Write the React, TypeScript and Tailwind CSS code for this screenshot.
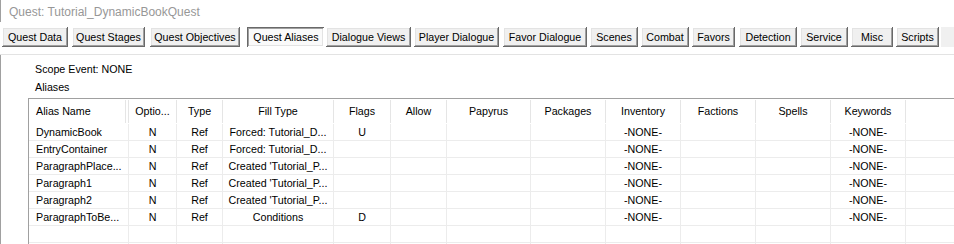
const tabs = [
  { label: "Quest Data", cls: "ml-[2px] w-[66px]" },
  { label: "Quest Stages", cls: "ml-[4px] w-[73px]" },
  { label: "Quest Objectives", cls: "ml-[5px] w-[90px]" },
  { label: "Quest Aliases", cls: "ml-[7px] w-[77px]", active: true },
  { label: "Dialogue Views", cls: "ml-[2px] w-[85px]" },
  { label: "Player Dialogue", cls: "ml-[3px] w-[85px]" },
  { label: "Favor Dialogue", cls: "ml-[4px] w-[84px]" },
  { label: "Scenes", cls: "ml-[3px] w-[48px]" },
  { label: "Combat", cls: "ml-[3px] w-[48px]" },
  { label: "Favors", cls: "ml-[3px] w-[43px]" },
  { label: "Detection", cls: "ml-[4px] w-[58px]" },
  { label: "Service", cls: "ml-[3px] w-[48px]" },
  { label: "Misc", cls: "ml-[3px] w-[42px]" },
  { label: "Scripts", cls: "ml-[3px] w-[43px]" },
];

const columns = [
  { label: "Alias Name", w: "w-[100px]", left: true },
  { label: "Optio...", w: "w-[48px]" },
  { label: "Type", w: "w-[46px]" },
  { label: "Fill Type", w: "w-[111px]" },
  { label: "Flags", w: "w-[57px]" },
  { label: "Allow", w: "w-[56px]" },
  { label: "Papyrus", w: "w-[84px]" },
  { label: "Packages", w: "w-[75px]" },
  { label: "Inventory", w: "w-[75px]" },
  { label: "Factions", w: "w-[75px]" },
  { label: "Spells", w: "w-[75px]" },
  { label: "Keywords", w: "w-[75px]" },
];

const rows = [
  ["DynamicBook", "N", "Ref", "Forced: Tutorial_D...", "U", "", "", "", "-NONE-", "", "", "-NONE-"],
  ["EntryContainer", "N", "Ref", "Forced: Tutorial_D...", "", "", "", "", "-NONE-", "", "", "-NONE-"],
  ["ParagraphPlace...", "N", "Ref", "Created 'Tutorial_P...", "", "", "", "", "-NONE-", "", "", "-NONE-"],
  ["Paragraph1", "N", "Ref", "Created 'Tutorial_P...", "", "", "", "", "-NONE-", "", "", "-NONE-"],
  ["Paragraph2", "N", "Ref", "Created 'Tutorial_P...", "", "", "", "", "-NONE-", "", "", "-NONE-"],
  ["ParagraphToBe...", "N", "Ref", "Conditions", "D", "", "", "", "-NONE-", "", "", "-NONE-"],
  ["", "", "", "", "", "", "", "", "", "", "", ""],
  ["", "", "", "", "", "", "", "", "", "", "", ""],
];

const Tab = ({ label, cls, active }: { label: string; cls: string; active?: boolean }) => (
  <div
    className={
      active
        ? `${cls} h-[20px] flex items-center justify-center pt-[1px] pl-[1px] bg-[#fafafa] shadow-[inset_1px_1px_#696969,inset_-1px_-1px_#ffffff,inset_2px_2px_#a0a0a0,inset_-2px_-2px_#e3e3e3]`
        : `${cls} h-[20px] flex items-center justify-center bg-[#f0f0f0] shadow-[inset_-1px_-1px_#696969,inset_1px_1px_#ffffff,inset_-2px_-2px_#a0a0a0,inset_2px_2px_#e3e3e3]`
    }
  >
    <span className="whitespace-nowrap">{label}</span>
  </div>
);

export default function App() {
  return (
    <div className="w-[954px] h-[244px] overflow-hidden bg-white text-[10.7px] text-black font-['Liberation_Sans',Arial,sans-serif]">
      <div className="h-[22px] border-l border-[#a0a0a0] pl-[8px] pt-[5px] text-[12px] leading-[14px] text-[#979797]">
        Quest: Tutorial_DynamicBookQuest
      </div>
      <div className="mt-[5px] flex h-[20px] leading-none">
        {tabs.map((t) => (
          <Tab key={t.label} {...t} />
        ))}
        <div className="flex-1 ml-[2px] bg-[#f0f0f0]" />
      </div>
      <div className="mt-[7px] h-px bg-[#e3e3e3]" />
      <div className="h-[189px] border-l border-[#a0a0a0] pt-[7px]">
        <div className="pl-[34px] leading-[14px]">Scope Event: NONE</div>
        <div className="mt-[4px] pl-[34px] leading-[14px]">Aliases</div>
        <div className="mt-[4px] ml-[27px] border-t border-l border-[#a0a0a0]">
          <div className="flex h-[25px]">
            {columns.map((c, i) => (
              <div key={c.label} className={`${c.w} shrink-0 flex py-[1px]`}>
                <div
                  className={`flex-1 flex items-center border-r border-[#e5e5e5] whitespace-nowrap ${
                    c.left ? "pl-[7px]" : "justify-center"
                  }`}
                >
                  {c.label}
                </div>
                {i === 0 && (
                  <>
                    <div className="w-[2px]" />
                    <div className="w-px bg-[#e5e5e5]" />
                  </>
                )}
              </div>
            ))}
            <div className="flex-1" />
          </div>
          {rows.map((r, ri) => (
            <div key={ri} className="flex h-[17px] border-b border-[#ececec]">
              {r.map((v, ci) => (
                <div
                  key={ci}
                  className={`${columns[ci].w} shrink-0 flex items-center overflow-hidden whitespace-nowrap border-r border-[#ececec] ${
                    ci === 0 ? "pl-[7px]" : "justify-center"
                  }`}
                >
                  {v}
                </div>
              ))}
              <div className="flex-1" />
            </div>
          ))}
        </div>
      </div>
    </div>
  );
}
